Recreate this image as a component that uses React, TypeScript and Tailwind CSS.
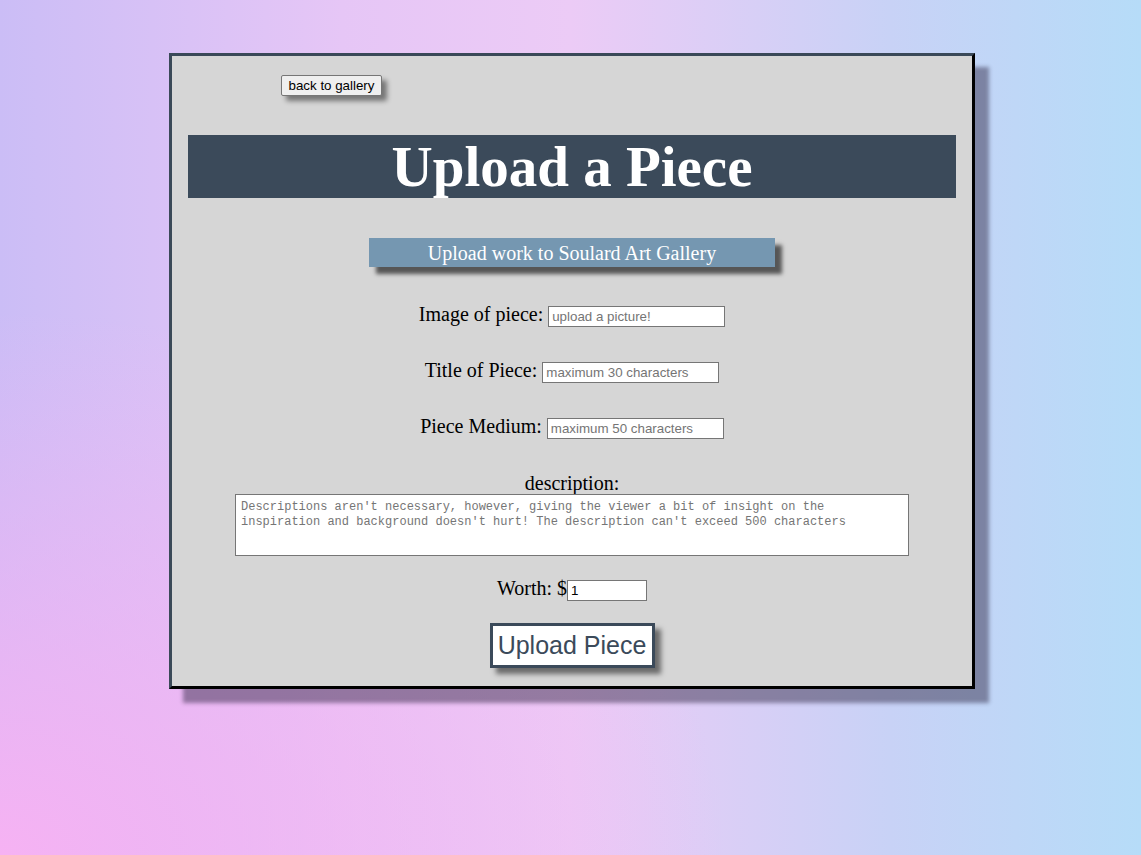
import { useState } from "react"

const fields = [
  { label: "Image of piece:", placeholder: "upload a picture!" },
  { label: "Title of Piece:", placeholder: "maximum 30 characters" },
  { label: "Piece Medium:", placeholder: "maximum 50 characters" },
]

export default function App() {
  const [worth, setWorth] = useState("1")

  return (
    <div className="min-h-[855px] w-full overflow-hidden bg-[radial-gradient(ellipse_at_bottom_left,#f6b2f3_0%,rgba(246,178,243,0)_45%),linear-gradient(to_right,#cbbdf6_0%,#e6c6f6_30%,#eccbf6_50%,#c8d2f6_78%,#b6dcf8_100%)] pt-[53px]">
      <div
        className="ml-[169px] flex w-[806px] flex-col items-center border-[3px] border-t-[#3a4958] border-l-[#3a4958] border-r-black border-b-black bg-[#d6d6d6] pt-[19px] pb-[18px] shadow-[14px_14px_4px_rgba(40,30,60,0.45)]"
        style={{ fontFamily: '"Liberation Serif", "Times New Roman", serif' }}
      >
        <div className="flex w-full pl-[109px]">
          <button
            className="h-[21px] w-[101px] rounded-[2px] border border-[#767676] bg-[#efefef] px-[6px] text-[13.33px] leading-none text-black shadow-[5px_5px_5px_rgba(0,0,0,0.45)]"
            style={{ fontFamily: '"Liberation Sans", Arial, sans-serif' }}
          >
            back to gallery
          </button>
        </div>

        <div className="mt-[39px] flex h-[63px] w-[768px] items-center justify-center bg-[#3b4a5a]">
          <h1 className="text-[57px] leading-none font-bold text-white">Upload a Piece</h1>
        </div>

        <div className="mt-[40px] flex h-[29px] w-[406px] items-center justify-center bg-[#7597b1] shadow-[7px_7px_4px_rgba(0,0,0,0.6)]">
          <span className="text-[20px] leading-none text-white">Upload work to Soulard Art Gallery</span>
        </div>

        {fields.map((f, i) => (
          <div key={i} className={`flex h-[21px] items-baseline justify-center ${i === 0 ? "mt-[37px]" : "mt-[35px]"}`}>
            <label className="text-[20px] leading-[21px] text-black">{f.label}&nbsp;</label>
            <input
              type="text"
              placeholder={f.placeholder}
              className="h-[21px] w-[177px] border border-[#767676] bg-white px-[3px] text-[13.33px] text-black placeholder:text-[#757575] outline-none"
              style={{ fontFamily: '"Liberation Sans", Arial, sans-serif' }}
            />
          </div>
        ))}

        <label className="mt-[35px] block h-[22px] text-[20px] leading-[23px] text-black">description:</label>
        <textarea
          placeholder="Descriptions aren't necessary, however, giving the viewer a bit of insight on the inspiration and background doesn't hurt! The description can't exceed 500 characters"
          className="h-[62px] w-[674px] resize-none border border-[#767676] bg-white px-[5px] py-[5px] text-[12px] leading-[15px] text-black placeholder:text-[#757575] outline-none"
          style={{ fontFamily: '"Liberation Mono", "DejaVu Sans Mono", monospace' }}
        />

        <div className="mt-[22px] flex h-[21px] items-baseline justify-center">
          <label className="text-[20px] leading-[21px] text-black">Worth: $</label>
          <input
            type="text"
            value={worth}
            onChange={(e) => setWorth(e.target.value)}
            className="h-[21px] w-[80px] border border-[#767676] bg-white px-[3px] text-[13.33px] text-black outline-none"
            style={{ fontFamily: '"Liberation Sans", Arial, sans-serif' }}
          />
        </div>

        <button
          className="mt-[24px] flex h-[45px] w-[165px] items-center justify-center border-[3px] border-[#3b4a5a] bg-white text-[25px] leading-none text-[#3b4a5a] shadow-[6px_6px_5px_rgba(0,0,0,0.5)]"
          style={{ fontFamily: '"Liberation Sans", Arial, sans-serif' }}
        >
          Upload Piece
        </button>
      </div>
    </div>
  )
}
